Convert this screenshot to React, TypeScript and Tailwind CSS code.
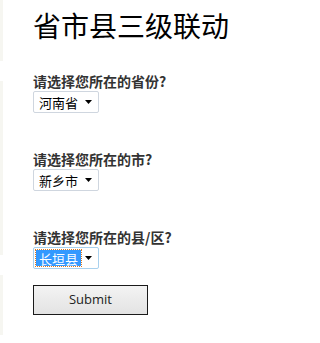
import React from "react";

const cjk = { fontFamily: '"Noto Sans CJK SC", "Liberation Sans", sans-serif' };

function Arrow() {
  return (
    <svg width="7" height="4" viewBox="0 0 7 4" className="shrink-0">
      <path d="M0 0 L7 0 L3.5 4 Z" fill="#000" />
    </svg>
  );
}

function FakeSelect({ value, focused }: { value: string; focused?: boolean }) {
  return (
    <div
      className={`flex h-[22px] w-[66px] items-center justify-between rounded-[2px] border pl-[2px] pr-[6px] ${
        focused ? "border-[#a9d1ee]" : "border-[#cfd6df]"
      } bg-white`}
    >
      {focused ? (
        <span
          className="flex h-[16px] items-center bg-[#3399ff] px-[3px] text-[13px] leading-none text-white outline-1 outline-dotted outline-[#e07b20]"
          style={cjk}
        >
          {value}
        </span>
      ) : (
        <span className="px-[3px] text-[13px] leading-none text-black" style={cjk}>
          {value}
        </span>
      )}
      <Arrow />
    </div>
  );
}

function Field({ label, value, focused }: { label: string; value: string; focused?: boolean }) {
  return (
    <div className="flex flex-col">
      <div className="text-[14px] font-bold leading-[17px] text-[#333]" style={cjk}>
        {label}
      </div>
      <div className="mt-[1px]">
        <FakeSelect value={value} focused={focused} />
      </div>
    </div>
  );
}

export default function App() {
  return (
    <div className="flex h-[343px] w-[297px] bg-white">
      <div className="flex w-[3px] flex-col gap-[20px]">
        <div className="h-[61px] bg-[#f6f6f1]" />
        <div className="h-[174px] bg-[#f6f6f1]" />
        <div className="h-[60px] bg-[#f6f6f1]" />
      </div>
      <div className="flex flex-col pl-[30px] pt-[10px]">
        <h1
          className="text-[28px] font-normal leading-[30px] text-black"
          style={{ fontFamily: '"Noto Sans CJK SC", serif' }}
        >
          省市县三级联动
        </h1>
        <div className="mt-[33px] flex flex-col gap-[38px]">
          <Field label="请选择您所在的省份?" value="河南省" />
          <Field label="请选择您所在的市?" value="新乡市" />
          <Field label="请选择您所在的县/区?" value="长垣县" focused />
        </div>
        <button
          className="mt-[16px] h-[30px] w-[115px] border border-[#1a1a1a] bg-gradient-to-b from-[#f3f3f3] to-[#e3e3e3] text-[13px] text-[#222]"
          style={{ fontFamily: '"Open Sans", "Noto Sans", sans-serif' }}
        >
          Submit
        </button>
      </div>
    </div>
  );
}
